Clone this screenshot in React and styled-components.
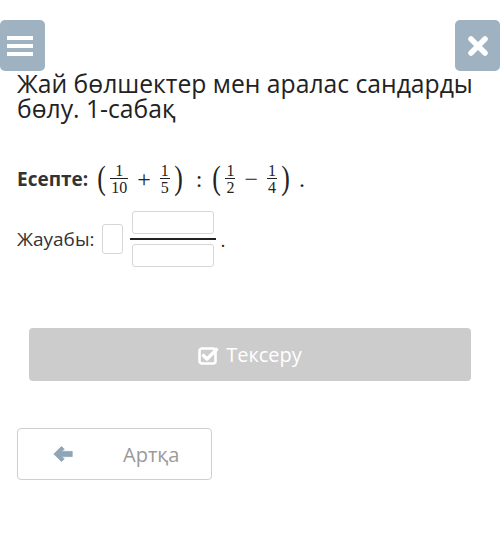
import React from 'react';
import styled, { createGlobalStyle } from 'styled-components';

const GlobalStyle = createGlobalStyle`
  body {
    margin: 0;
    background: #fff;
    font-family: "Open Sans", "Noto Sans", sans-serif;
    color: #222;
  }
`;

const Page = styled.div`
  padding-top: 20px;
`;

const TopBar = styled.div`
  display: flex;
  justify-content: space-between;
`;

const NavButton = styled.button.attrs({ type: 'button' })`
  width: 45px;
  height: 51px;
  border: none;
  border-radius: 5px;
  background: #9eb2c1;
  padding: 0;
  display: flex;
  align-items: center;
  justify-content: center;
`;

const Burger = styled.span`
  display: flex;
  flex-direction: column;
  gap: 4px;
  margin-left: -6px;

  span {
    display: block;
    width: 26px;
    height: 4px;
    background: #fff;
  }
`;

const Title = styled.h1`
  margin: 0 0 0 17px;
  font-size: 24.7px;
  line-height: 25px;
  font-weight: 400;
  color: #222;
`;

const TaskRow = styled.div`
  display: flex;
  align-items: center;
  height: 36px;
  margin: 40px 0 0 17px;
`;

const Label = styled.span`
  font-size: 19px;
  font-weight: ${p => (p.bold ? 700 : 400)};
  color: #333;
  margin-right: ${p => p.gap || 0}px;
`;

const Math = styled.span`
  display: inline-flex;
  align-items: center;
  font-family: "Liberation Serif", "DejaVu Serif", serif;
  color: #222;
`;

const Paren = styled.span`
  font-size: 33px;
  line-height: 1;
  margin: 0 2px;
  transform: scaleX(0.78);
  position: relative;
  top: -1px;
`;

const Op = styled.span`
  font-size: 24px;
  margin: 0 ${p => p.r ?? p.m ?? 8}px 0 ${p => p.m ?? 8}px;
  line-height: 1;
`;

const Frac = styled.span`
  display: inline-flex;
  flex-direction: column;
  align-items: center;
  font-size: 16px;
  line-height: 13px;
  margin: 0 1px;

  i {
    font-style: normal;
    padding: 0 1px;
  }

  b {
    display: block;
    align-self: stretch;
    height: 1px;
    background: #222;
    margin: 1px 0 2px;
  }
`;

const AnswerRow = styled.div`
  display: flex;
  align-items: center;
  margin: 11px 0 0 17px;
  height: 62px;
`;

const Box = styled.span`
  display: block;
  box-sizing: border-box;
  width: ${p => p.w}px;
  height: ${p => p.h}px;
  border: 1px solid #d6d6d6;
  border-radius: 3px;
  background: #fff;
`;

const AnswerFrac = styled.span`
  display: flex;
  flex-direction: column;
  align-items: center;
  width: 86px;
  margin-left: 7px;

  b {
    display: block;
    width: 100%;
    height: 2px;
    background: #222;
    margin: 4px 0;
  }
`;

const Dot = styled.span`
  font-size: 19px;
  margin: 2px 0 0 5px;
`;

const CheckButton = styled.button.attrs({ type: 'button' })`
  display: flex;
  align-items: center;
  justify-content: center;
  gap: 6px;
  width: calc(100% - 58px);
  height: 53px;
  margin: 58px 29px 0;
  border: none;
  border-radius: 4px;
  background: #cccccc;
  color: #fff;
  font-family: "Open Sans", sans-serif;
  font-size: 20px;
`;

const BackButton = styled.button.attrs({ type: 'button' })`
  display: flex;
  align-items: center;
  width: 195px;
  height: 52px;
  margin: 47px 0 0 17px;
  padding: 0 0 0 35px;
  box-sizing: border-box;
  border: 1px solid #cfcfcf;
  border-radius: 4px;
  background: #fff;
  color: #9a9a9a;
  font-family: "Open Sans", sans-serif;
  font-size: 20px;

  svg {
    margin-right: 50px;
  }
`;

const CheckIcon = () => (
  <svg width="22" height="20" viewBox="0 0 22 20">
    <rect x="1.5" y="3.5" width="16" height="15" rx="2.5" fill="none" stroke="#fff" strokeWidth="2.6" />
    <path d="M4.5 9.5 L9 14 L19.5 3.5" fill="none" stroke="#fff" strokeWidth="3.4" strokeLinejoin="round" />
  </svg>
);

const ArrowIcon = () => (
  <svg width="20" height="16" viewBox="0 0 20 16">
    <path
      d="M8.5 0.5 L0.8 8 L8.5 15.5 L11.3 12.8 L8.3 10.6 H19.2 V5.4 H8.3 L11.3 3.2 Z"
      fill="#8fa5b5"
      stroke="#8fa5b5"
      strokeWidth="0.8"
      strokeLinejoin="round"
    />
  </svg>
);

const CloseIcon = () => (
  <svg width="22" height="22" viewBox="0 0 22 22">
    <path d="M4 4 L18 18 M18 4 L4 18" stroke="#fff" strokeWidth="5.5" strokeLinecap="round" />
  </svg>
);

const Fraction = ({ n, d }) => (
  <Frac>
    <i>{n}</i>
    <b />
    <i>{d}</i>
  </Frac>
);

export default function App() {
  return (
    <Page>
      <GlobalStyle />
      <TopBar>
        <NavButton aria-label="menu">
          <Burger>
            <span />
            <span />
            <span />
          </Burger>
        </NavButton>
        <NavButton aria-label="close">
          <CloseIcon />
        </NavButton>
      </TopBar>

      <Title>
        Жай бөлшектер мен аралас сандарды
        <br />
        бөлу. 1-сабақ
      </Title>

      <TaskRow>
        <Label bold gap={6}>Есепте:</Label>
        <Math>
          <Paren>(</Paren>
          <Fraction n="1" d="10" />
          <Op>+</Op>
          <Fraction n="1" d="5" />
          <Paren>)</Paren>
          <Op m={10} r={7}>:</Op>
          <Paren>(</Paren>
          <Fraction n="1" d="2" />
          <Op>−</Op>
          <Fraction n="1" d="4" />
          <Paren>)</Paren>
          <Op m={6}>.</Op>
        </Math>
      </TaskRow>

      <AnswerRow>
        <Label gap={7}>Жауабы:</Label>
        <Box w={21} h={30} />
        <AnswerFrac>
          <Box w={82} h={23} />
          <b />
          <Box w={82} h={23} />
        </AnswerFrac>
        <Dot>.</Dot>
      </AnswerRow>

      <CheckButton>
        <CheckIcon />
        Тексеру
      </CheckButton>

      <BackButton>
        <ArrowIcon />
        Артқа
      </BackButton>
    </Page>
  );
}
